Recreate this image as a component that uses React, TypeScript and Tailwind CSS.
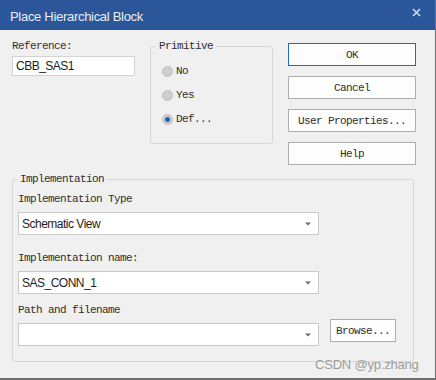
import React from "react";

const mono = { fontFamily: '"Liberation Mono", "DejaVu Sans Mono", monospace' };
const sans = { fontFamily: '"Liberation Sans", Arial, sans-serif' };

function Label({ children, className = "" }: { children: React.ReactNode; className?: string }) {
  return (
    <div className={`h-[14px] leading-[14px] text-[11px] tracking-[-0.6px] text-[#2e2e2e] whitespace-pre ${className}`} style={mono}>
      {children}
    </div>
  );
}

function Radio({ label, checked }: { label: string; checked?: boolean }) {
  return (
    <div className="flex items-center h-[14px] gap-[3px]">
      <div className="w-[11px] h-[11px] rounded-full bg-[#cfcfcf] border border-[#bdbdbd] flex items-center justify-center">
        {checked && <div className="w-[5px] h-[5px] rounded-full bg-[#1a5fc2]" />}
      </div>
      <Label>{label}</Label>
    </div>
  );
}

function Btn({ children, primary, className = "" }: { children: React.ReactNode; primary?: boolean; className?: string }) {
  return (
    <div
      className={`h-[23px] flex items-center justify-center bg-[#fdfdfd] border ${primary ? "border-[#1b6acb]" : "border-[#adadad]"} ${className}`}
    >
      <Label>{children}</Label>
    </div>
  );
}

function Select({ value, className = "" }: { value?: string; className?: string }) {
  return (
    <div className={`w-[301px] h-[23px] bg-white border border-[#c9c9c9] flex items-center pl-[3px] pr-[7px] ${className}`}>
      <div className="flex-1 text-[12px] tracking-[-0.5px] text-[#1e1e1e]" style={sans}>
        {value}
      </div>
      <svg width="6" height="4" viewBox="0 0 6 4">
        <path d="M0 0.5 H6 L3 3.5 Z" fill="#6b6b6b" />
      </svg>
    </div>
  );
}

export default function App() {
  return (
    <div className="w-[436px] h-[380px] bg-[#6e6e6e]">
      <div className="w-[435px] h-[378px] bg-[#f0f0f0] flex flex-col relative">
        {/* title bar */}
        <div className="h-[30px] bg-[#2b579a] flex items-center pl-[10px] pr-[14px] pt-[4px]">
          <div className="flex-1 text-[13px] tracking-[-0.3px] text-[#e8edf5]" style={sans}>
            Place Hierarchical Block
          </div>
          <svg width="9" height="9" viewBox="0 0 9 9" className="mb-[10px]">
            <path d="M1 1 L8 8 M8 1 L1 8" stroke="#cfd8e8" strokeWidth="1.6" />
          </svg>
        </div>

        {/* top row */}
        <div className="flex items-start pl-[12px]">
          <div className="w-[123px] pt-[9px] flex flex-col">
            <Label>Reference:</Label>
            <div className="mt-[3px] h-[20px] bg-white border border-[#d3d3d3] flex items-center pl-[3px]">
              <span className="text-[12px] tracking-[-0.5px] text-[#1e1e1e]" style={sans}>CBB_SAS1</span>
            </div>
          </div>

          <fieldset className="ml-[15px] mt-[9px] w-[123px] h-[105px] border border-[#d6d6d6] rounded-[3px] pl-[11px]">
            <legend className="ml-[-6px] px-[3px]">
              <Label>Primitive</Label>
            </legend>
            <div className="flex flex-col gap-[10px] pt-[11px]">
              <Radio label="No" />
              <Radio label="Yes" />
              <Radio label="Def..." checked />
            </div>
          </fieldset>

          <div className="ml-[15px] mt-[13px] w-[128px] flex flex-col gap-[10px]">
            <Btn primary>OK</Btn>
            <Btn>Cancel</Btn>
            <Btn>User Properties...</Btn>
            <Btn>Help</Btn>
          </div>
        </div>

        {/* implementation */}
        <fieldset className="ml-[12px] mt-[7px] w-[402px] h-[190px] border border-[#d6d6d6] rounded-[3px] pl-[5px]">
          <legend className="ml-[-1px] px-[3px]">
            <Label>Implementation</Label>
          </legend>
          <Label className="mt-[6px]">Implementation Type</Label>
          <Select value="Schematic View" className="mt-[6px]" />
          <Label className="mt-[16px]">Implementation name:</Label>
          <Select value="SAS_CONN_1" className="mt-[6px]" />
          <Label className="mt-[9px]">Path and filename</Label>
          <div className="flex items-start">
            <Select className="mt-[6px]" />
            <Btn className="ml-[11px] mt-[2px] w-[66px]">Browse...</Btn>
          </div>
        </fieldset>

        <div
          className="absolute left-[315px] top-[355px] text-[13px] text-[#9d9d9d] tracking-[-0.2px]"
          style={sans}
        >
          CSDN @yp.zhang
        </div>
      </div>
    </div>
  );
}
